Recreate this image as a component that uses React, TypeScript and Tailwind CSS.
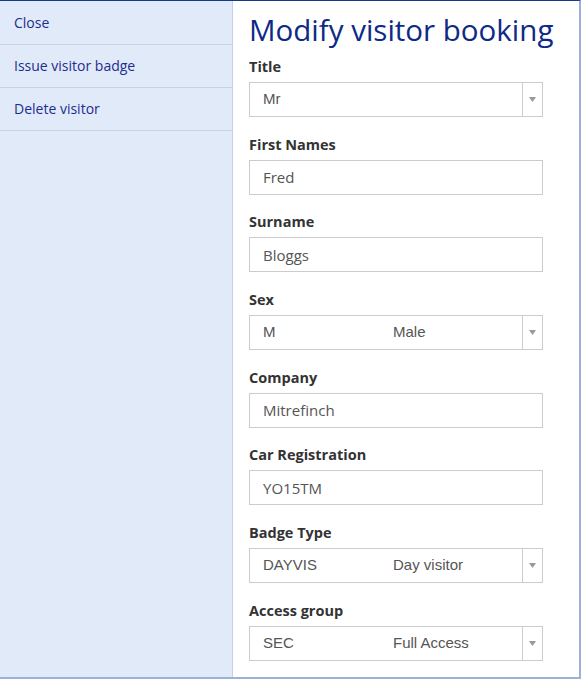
import React from "react";

type Field = {
  label: string;
  value: string;
  extra?: string;
  select?: boolean;
};

const fields: Field[] = [
  { label: "Title", value: "Mr", select: true },
  { label: "First Names", value: "Fred" },
  { label: "Surname", value: "Bloggs" },
  { label: "Sex", value: "M", extra: "Male", select: true },
  { label: "Company", value: "Mitrefinch" },
  { label: "Car Registration", value: "YO15TM" },
  { label: "Badge Type", value: "DAYVIS", extra: "Day visitor", select: true },
  { label: "Access group", value: "SEC", extra: "Full Access", select: true },
];

const menu = ["Close", "Issue visitor badge", "Delete visitor"];

function FormField({ field }: { field: Field }) {
  return (
    <div className="flex flex-col">
      <label className="text-[14.5px] font-bold leading-[20px] text-[#333333]">{field.label}</label>
      <div className="mt-[5px] flex h-[35px] w-[294px] items-center border border-[#cccccc] bg-white">
        {field.select ? (
          <>
            <div className="flex flex-1 items-center pl-[13px] font-['Liberation_Sans',sans-serif] text-[15px] text-[#555555]">
              <span className="w-[130px]">{field.value}</span>
              {field.extra ? <span>{field.extra}</span> : null}
            </div>
            <div className="flex h-full w-[20px] items-center justify-center border-l border-[#cccccc]">
              <svg width="7" height="5" viewBox="0 0 7 5">
                <path d="M0 0 L7 0 L3.5 5 Z" fill="#999999" />
              </svg>
            </div>
          </>
        ) : (
          <span className="pl-[13px] text-[15px] text-[#555555]">{field.value}</span>
        )}
      </div>
    </div>
  );
}

export default function App() {
  return (
    <div className="flex h-[679px] w-[581px] border-t border-r-2 border-b-2 border-t-[#163a8c] border-r-[#9fb0d8] border-b-[#9fb0d8] bg-white font-['Open_Sans',sans-serif]">
      <aside className="w-[233px] shrink-0 border-r border-[#c5d0e2] bg-[#e1eaf9] pt-[1px]">
        {menu.map((item) => (
          <div key={item} className="flex h-[43px] items-center border-b border-[#c8d2e4] pb-[2px] pl-[14px] text-[14px] text-[#1c2d8f]">
            {item}
          </div>
        ))}
      </aside>
      <main className="flex-1 pl-[16px]">
        <h1 className="mt-[9px] text-[29.5px] leading-[40px] text-[#0e2a86]">Modify visitor booking</h1>
        <div className="mt-[7px] flex flex-col gap-[17.7px]">
          {fields.map((f) => (
            <FormField key={f.label} field={f} />
          ))}
        </div>
      </main>
    </div>
  );
}
